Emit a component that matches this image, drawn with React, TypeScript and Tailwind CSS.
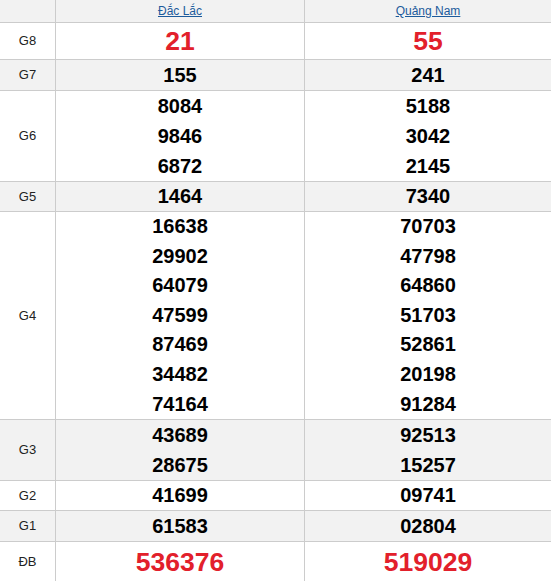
import React from 'react';

type Row = { label: string; a: string[]; b: string[]; gray: boolean; big?: boolean; lh: string };

const rows: Row[] = [
  { label: 'G8', a: ['21'], b: ['55'], gray: false, big: true, lh: 'leading-[36px]' },
  { label: 'G7', a: ['155'], b: ['241'], gray: true, lh: 'leading-[30px]' },
  { label: 'G6', a: ['8084', '9846', '6872'], b: ['5188', '3042', '2145'], gray: false, lh: 'leading-[30px]' },
  { label: 'G5', a: ['1464'], b: ['7340'], gray: true, lh: 'leading-[29px]' },
  {
    label: 'G4',
    a: ['16638', '29902', '64079', '47599', '87469', '34482', '74164'],
    b: ['70703', '47798', '64860', '51703', '52861', '20198', '91284'],
    gray: false,
    lh: 'leading-[29.6px]',
  },
  { label: 'G3', a: ['43689', '28675'], b: ['92513', '15257'], gray: true, lh: 'leading-[30px]' },
  { label: 'G2', a: ['41699'], b: ['09741'], gray: false, lh: 'leading-[29px]' },
  { label: 'G1', a: ['61583'], b: ['02804'], gray: true, lh: 'leading-[30px]' },
  { label: 'ĐB', a: ['536376'], b: ['519029'], gray: false, big: true, lh: 'leading-[40px]' },
];

function NumCell({ items, row, last }: { items: string[]; row: Row; last?: boolean }) {
  const size = row.big ? 'text-[26.5px] text-[#e2202b]' : 'text-[20px] text-black';
  return (
    <div className={`flex flex-col ${last ? '' : 'border-r border-[#cccccc]'}`}>
      {items.map((n, i) => (
        <div key={`${n}-${i}`} className={`text-center font-bold ${row.lh} ${size}`}>
          {n}
        </div>
      ))}
    </div>
  );
}

export default function App() {
  return (
    <div className="w-[551px] bg-white" style={{ fontFamily: '"Liberation Sans", Arial, sans-serif' }}>
      <div className="grid grid-cols-[56px_249px_1fr] border-b border-[#cccccc] bg-[#f2f2f2] text-[12px] leading-[22px]">
        <div className="border-r border-[#cccccc]" />
        <div className="border-r border-[#cccccc] text-center">
          <a className="text-[#1c5b9c] underline">Đắc Lắc</a>
        </div>
        <div className="text-center">
          <a className="text-[#1c5b9c] underline">Quảng Nam</a>
        </div>
      </div>
      {rows.map((row) => (
        <div
          key={row.label}
          className={`grid grid-cols-[56px_249px_1fr] border-b border-[#cccccc] ${row.gray ? 'bg-[#f2f2f2]' : 'bg-white'}`}
        >
          <div className="flex items-center justify-center border-r border-[#cccccc] text-[13px] text-[#222]">
            {row.label}
          </div>
          <NumCell items={row.a} row={row} />
          <NumCell items={row.b} row={row} last />
        </div>
      ))}
    </div>
  );
}
